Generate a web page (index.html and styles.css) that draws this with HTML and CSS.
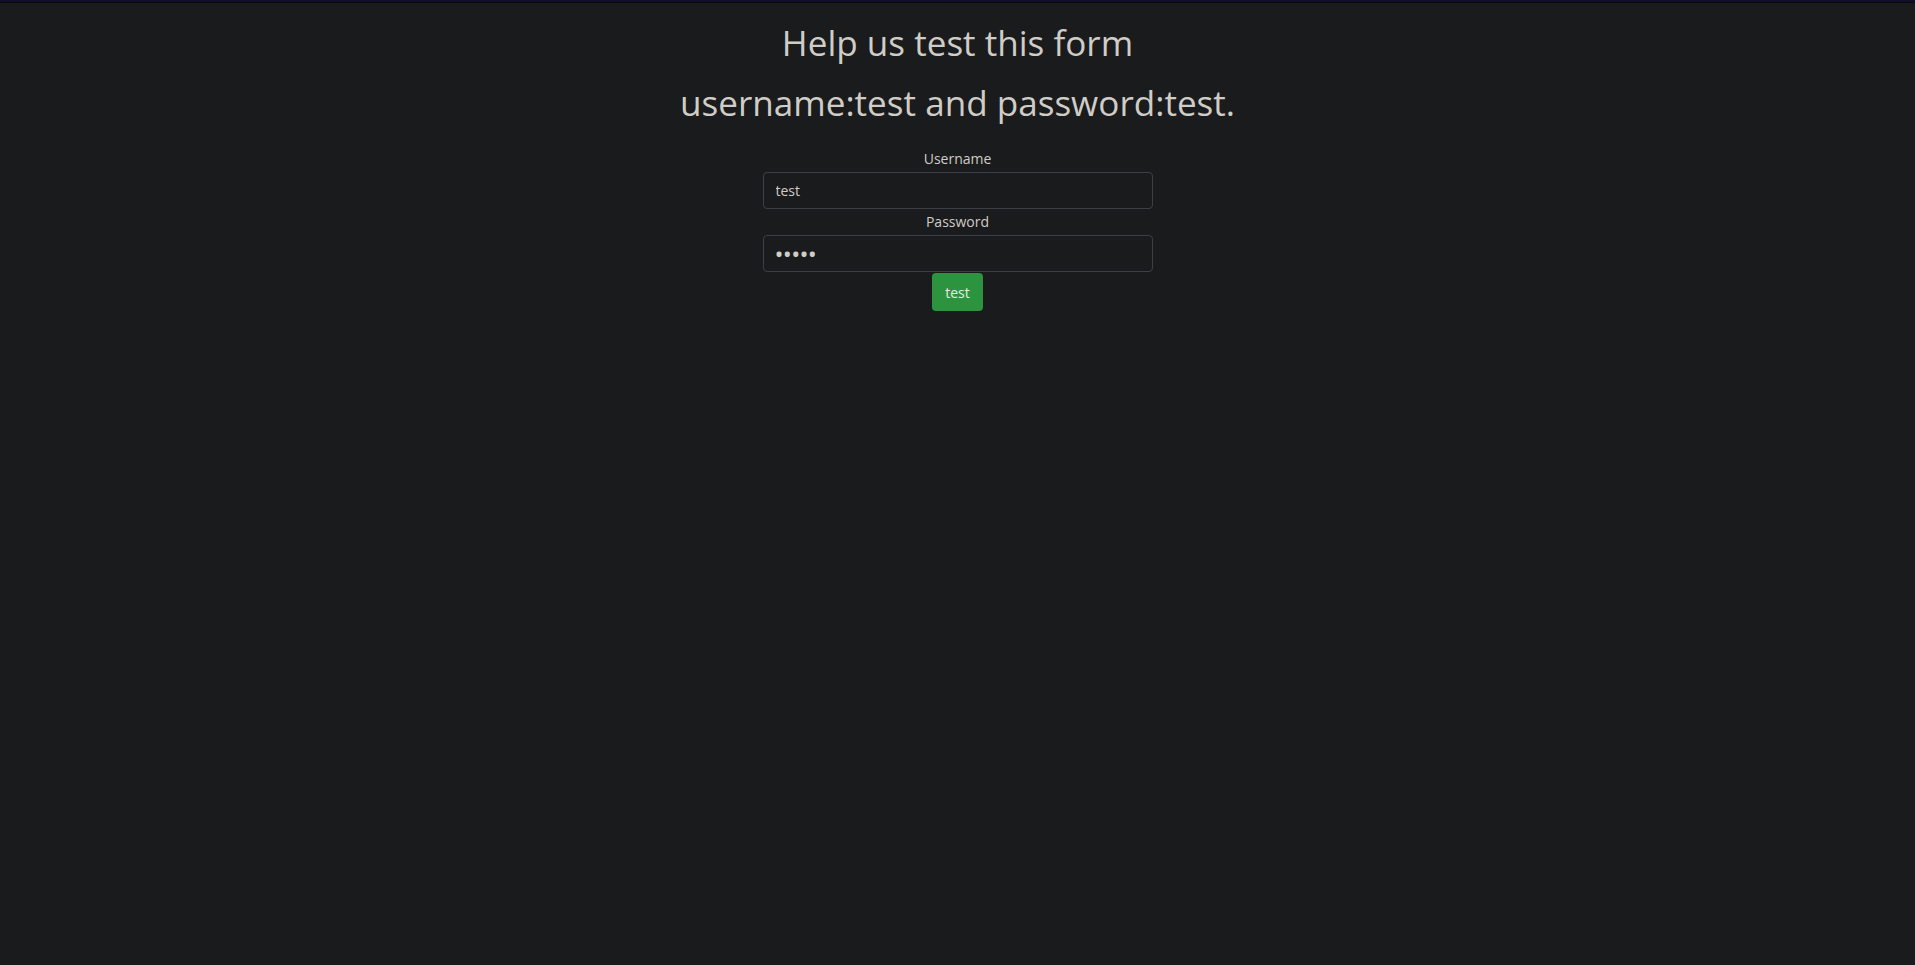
FILE: index.html
```html
<!DOCTYPE html>
<html lang="en">
<head>
<meta charset="utf-8">
<title>Help us test this form</title>
<link rel="stylesheet" href="styles.css">
</head>
<body>
<div class="topbar"></div>
<main class="page">
  <h1 class="title">Help us test this form</h1>
  <h1 class="title">username:test and password:test.</h1>
  <form class="form">
    <label class="label" for="username">Username</label>
    <input class="field" id="username" type="text" value="test">
    <label class="label" for="password">Password</label>
    <input class="field field-secret" id="password" type="password" value="testt">
    <button class="btn" type="button">test</button>
  </form>
</main>
</body>
</html>
```

FILE: styles.css
```css
html, body {
  margin: 0;
  padding: 0;
  background: #1a1b1d;
}

body {
  font-family: "Open Sans", "Noto Sans", sans-serif;
  color: #d0ccc6;
  min-height: 965px;
}

.topbar {
  height: 2px;
  background: #110e28;
  border-bottom: 1px solid #0a0a0d;
}

.page {
  padding-top: 9px;
  text-align: center;
}

.title {
  margin: 0;
  font-size: 35.1px;
  font-weight: 400;
  line-height: 60px;
  color: #d0ccc6;
}

.form {
  margin-top: 14px;
  display: flex;
  flex-direction: column;
  align-items: center;
}

.label {
  display: block;
  font-size: 14px;
  line-height: 26px;
  color: #d0ccc6;
}

.field {
  box-sizing: border-box;
  width: 390px;
  height: 37px;
  padding: 0 12px;
  margin: 0;
  font-family: "Open Sans", "Noto Sans", sans-serif;
  font-size: 14px;
  color: #d0ccc6;
  background: #1a1b1d;
  border: 1px solid #3c4043;
  border-radius: 4px;
  outline: none;
}

.field-secret {
  font-size: 24px;
  letter-spacing: -0.7px;
  padding-left: 11px;
}

.btn {
  margin-top: 1px;
  height: 38px;
  padding: 0 13.5px;
  font-family: "Open Sans", "Noto Sans", sans-serif;
  font-size: 14px;
  color: #ece9e4;
  background: #2c943e;
  border: none;
  border-radius: 4px;
  cursor: pointer;
}
```
